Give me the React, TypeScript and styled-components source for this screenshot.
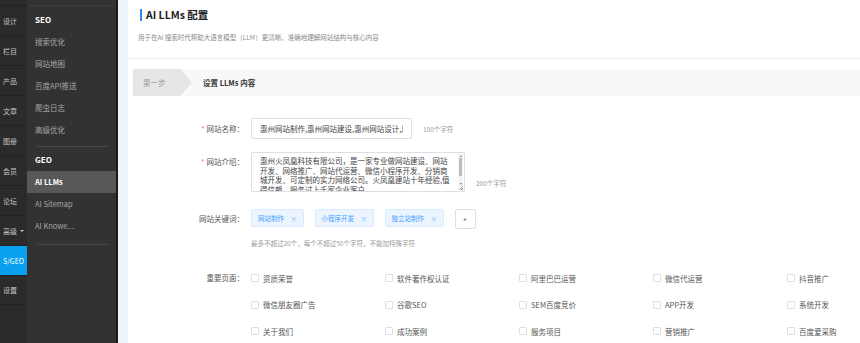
import React from 'react';
import styled, { createGlobalStyle } from 'styled-components';

const GlobalStyle = createGlobalStyle`
  html, body {
    margin: 0;
    padding: 0;
    background: #ffffff;
  }
  body {
    font-family: "Noto Sans CJK SC", "Noto Sans", sans-serif;
  }
  * {
    box-sizing: border-box;
  }
`;

const Shell = styled.div`
  display: flex;
  width: 860px;
  height: 343px;
  overflow: hidden;
`;

const Rail = styled.nav`
  width: 27px;
  flex-shrink: 0;
  background: #2b2b2b;
  padding-top: 5px;
`;

const RailItem = styled.div<{ $active?: boolean }>`
  height: 30px;
  display: flex;
  align-items: center;
  padding-left: 3px;
  border-top: 1px solid #222222;
  font-size: 7px;
  white-space: nowrap;
  overflow: hidden;
  color: ${(p) => (p.$active ? '#ffffff' : '#c4c4c4')};
  background: ${(p) => (p.$active ? '#0aa0f0' : 'transparent')};

  &:last-child {
    border-bottom: 1px solid #222222;
  }
`;

const Caret = styled.span`
  display: inline-block;
  margin-left: 3px;
  border-left: 2px solid transparent;
  border-right: 2px solid transparent;
  border-top: 2.5px solid #c4c4c4;
`;

const SubNav = styled.aside`
  width: 91px;
  flex-shrink: 0;
  background: #323232;
  border-right: 2px solid #1c1c1c;
  padding-top: 5px;
`;

const SubNavInner = styled.div`
  border-top: 1px solid #3c3c3c;
  padding-top: 3px;
`;

const SubHeader = styled.div`
  height: 22px;
  line-height: 22px;
  padding-left: 8px;
  font-size: 8px;
  font-weight: 700;
  color: #ffffff;
`;

const SubItem = styled.div<{ $active?: boolean }>`
  height: 22px;
  line-height: 22px;
  padding-left: 8px;
  font-size: 7.5px;
  white-space: nowrap;
  color: ${(p) => (p.$active ? '#ffffff' : '#a6a6a6')};
  font-weight: ${(p) => (p.$active ? 700 : 400)};
  background: ${(p) => (p.$active ? '#585858' : 'transparent')};
`;

const SubDivider = styled.div<{ $top: number }>`
  height: 1px;
  background: #474747;
  margin: ${(p) => p.$top}px 8px 2px 10px;
`;

const Main = styled.main`
  flex: 1;
  min-width: 0;
  display: flex;
  background: #eef3f7;
  padding-left: 10px;
`;

const Card = styled.section`
  flex: 1;
  min-width: 0;
  background: #ffffff;
  overflow: hidden;
`;

const CardHead = styled.header`
  padding: 9px 11px 16px;
  border-bottom: 1px solid #ededed;
`;

const Title = styled.h1`
  margin: 0 0 0 1px;
  padding-left: 4px;
  border-left: 2px solid #2d8cf0;
  font-size: 10.5px;
  line-height: 12px;
  font-weight: 700;
  color: #222222;
`;

const Desc = styled.p`
  margin: 11px 0 0 -1px;
  font-size: 6.5px;
  line-height: 10px;
  color: #8a8a8a;
`;

const StepBar = styled.div`
  display: flex;
  align-items: center;
  height: 27px;
  margin: 10px 0 0 5px;
  background: #f8f8f8;
`;

const StepTag = styled.div`
  width: 59px;
  height: 27px;
  display: flex;
  align-items: center;
  padding-left: 10px;
  background: #e6e6e6;
  clip-path: polygon(0 0, 80% 0, 100% 50%, 80% 100%, 0 100%);
  font-size: 7.5px;
  color: #9a9a9a;
`;

const StepTitle = styled.div`
  margin-left: 11px;
  font-size: 7.5px;
  font-weight: 700;
  color: #333333;
`;

const Form = styled.div`
  margin: 22px 0 0 5px;
`;

const Row = styled.div<{ $gap: number; $align?: string }>`
  display: flex;
  align-items: ${(p) => p.$align || 'center'};
  margin-top: ${(p) => p.$gap}px;
`;

const Label = styled.div<{ $pt?: number }>`
  width: 111px;
  flex-shrink: 0;
  margin-right: 7px;
  padding-top: ${(p) => p.$pt || 0}px;
  text-align: right;
  font-size: 7.5px;
  line-height: 10px;
  color: #555555;
`;

const Star = styled.span`
  color: #f56c6c;
  margin-right: 2px;
`;

const TextInput = styled.input`
  width: 161px;
  height: 21px;
  padding: 0 8px;
  border: 1px solid #dcdfe6;
  border-radius: 2px;
  font-family: inherit;
  font-size: 7.5px;
  color: #444444;
  outline: none;
`;

const AreaWrap = styled.div`
  position: relative;
  width: 214px;
  height: 40px;
`;

const TextArea = styled.textarea`
  display: block;
  width: 214px;
  height: 40px;
  padding: 3px 12px 0 8px;
  border: 1px solid #dcdfe6;
  border-radius: 2px;
  font-family: inherit;
  font-size: 7.5px;
  line-height: 9.7px;
  color: #444444;
  outline: none;
  overflow: hidden;
  resize: none;
`;

const FakeScroll = styled.div`
  position: absolute;
  top: 2px;
  right: 2px;
  width: 5px;
  height: 32px;
  display: flex;
  flex-direction: column;
  align-items: center;
  justify-content: space-between;
  background: #f4f4f4;
`;

const Arrow = styled.span<{ $down?: boolean }>`
  margin: 1px 0;
  border-left: 1.5px solid transparent;
  border-right: 1.5px solid transparent;
  ${(p) => (p.$down ? 'border-top: 2px solid #777;' : 'border-bottom: 2px solid #777;')}
`;

const Thumb = styled.span`
  width: 3px;
  height: 18px;
  margin-bottom: auto;
  background: #bdbdbd;
`;

const Grip = styled.span`
  position: absolute;
  right: 2px;
  bottom: 2px;
  width: 4px;
  height: 4px;
  background: linear-gradient(135deg, transparent 45%, #999 45%, #999 58%, transparent 58%, transparent 75%, #999 75%);
`;

const Hint = styled.span<{ $mt?: number }>`
  margin-left: 11px;
  margin-top: ${(p) => p.$mt || 0}px;
  font-size: 6.5px;
  color: #9a9a9a;
`;

const Tags = styled.div`
  display: flex;
  align-items: flex-start;
  gap: 11px;
`;

const Tag = styled.span`
  height: 18px;
  display: inline-flex;
  align-items: center;
  gap: 6px;
  padding: 0 5px 0 6px;
  background: #ecf5ff;
  border: 1px solid #d9ecff;
  border-radius: 2px;
  font-size: 6.5px;
  color: #409eff;
`;

const TagClose = styled.span`
  font-size: 7.5px;
  color: #79b8ff;
`;

const AddButton = styled.span`
  width: 21px;
  height: 20px;
  display: inline-flex;
  align-items: center;
  justify-content: center;
  background: #ffffff;
  border: 1px solid #dcdfe6;
  border-radius: 2px;
  font-size: 6px;
  color: #333333;
`;

const Note = styled.div`
  margin: 9px 0 0 118px;
  font-size: 6.5px;
  line-height: 10px;
  color: #9a9a9a;
`;

const CheckGrid = styled.div`
  display: grid;
  grid-template-columns: repeat(5, 134px);
  row-gap: 16.5px;
`;

const CheckItem = styled.label`
  display: flex;
  align-items: center;
  gap: 4px;
  height: 10px;
  font-size: 7.5px;
  color: #555555;
  white-space: nowrap;
`;

const Box = styled.span`
  width: 8px;
  height: 8px;
  border: 1px solid #dcdfe6;
  border-radius: 1px;
  background: #ffffff;
`;

const railItems = ['设计', '栏目', '产品', '文章', '图册', '会员', '论坛', '高级', 'S/GEO', '设置'];
const seoItems = ['搜索优化', '网站地图', '百度API推送', '爬虫日志', '高级优化'];
const geoItems = ['AI LLMs', 'AI Sitemap', 'AI Knowe...'];
const keywords = ['网站制作', '小程序开发', '独立站制作'];
const pages = [
  '资质荣誉', '软件著作权认证', '阿里巴巴运营', '微信代运营', '抖音推广',
  '微信朋友圈广告', '谷歌SEO', 'SEM百度竞价', 'APP开发', '系统开发',
  '关于我们', '成功案例', '服务项目', '营销推广', '百度爱采购',
];

const intro =
  '惠州火凤凰科技有限公司，是一家专业做网站建设、网站开发、网络推广、网站代运营、微信小程序开发、分销商城开发、可定制的实力网络公司。火凤凰建站十年经验,值得信赖，服务过上千家企业客户。';

export default function App() {
  return (
    <>
      <GlobalStyle />
      <Shell>
        <Rail>
          {railItems.map((item) => (
            <RailItem key={item} $active={item === 'S/GEO'}>
              {item}
              {item === '高级' && <Caret />}
            </RailItem>
          ))}
        </Rail>

        <SubNav>
          <SubNavInner>
            <SubHeader>SEO</SubHeader>
            {seoItems.map((item) => (
              <SubItem key={item}>{item}</SubItem>
            ))}
            <SubDivider $top={5} />
            <SubHeader>GEO</SubHeader>
            {geoItems.map((item) => (
              <SubItem key={item} $active={item === 'AI LLMs'}>
                {item}
              </SubItem>
            ))}
            <SubDivider $top={7} />
          </SubNavInner>
        </SubNav>

        <Main>
          <Card>
            <CardHead>
              <Title>AI LLMs 配置</Title>
              <Desc>用于在AI 搜索时代帮助大语言模型（LLM）更清晰、准确地理解网站结构与核心内容</Desc>
            </CardHead>

            <StepBar>
              <StepTag>第一步</StepTag>
              <StepTitle>设置 LLMs 内容</StepTitle>
            </StepBar>

            <Form>
              <Row $gap={0}>
                <Label>
                  <Star>*</Star>网站名称：
                </Label>
                <TextInput readOnly value="惠州网站制作,惠州网站建设,惠州网站设计,惠州网站开发" />
                <Hint>100个字符</Hint>
              </Row>

              <Row $gap={13} $align="flex-start">
                <Label $pt={5}>
                  <Star>*</Star>网站介绍：
                </Label>
                <AreaWrap>
                  <TextArea readOnly value={intro} />
                  <FakeScroll>
                    <Arrow />
                    <Thumb />
                    <Arrow $down />
                  </FakeScroll>
                  <Grip />
                </AreaWrap>
                <Hint $mt={26}>200个字符</Hint>
              </Row>

              <Row $gap={17}>
                <Label>网站关键词：</Label>
                <Tags>
                  {keywords.map((k) => (
                    <Tag key={k}>
                      {k}
                      <TagClose>×</TagClose>
                    </Tag>
                  ))}
                  <AddButton>+</AddButton>
                </Tags>
              </Row>
              <Note>最多不超过20个，每个不超过50个字符，不能加特殊字符</Note>

              <Row $gap={25} $align="flex-start">
                <Label>重要页面：</Label>
                <CheckGrid>
                  {pages.map((p) => (
                    <CheckItem key={p}>
                      <Box />
                      {p}
                    </CheckItem>
                  ))}
                </CheckGrid>
              </Row>
            </Form>
          </Card>
        </Main>
      </Shell>
    </>
  );
}
